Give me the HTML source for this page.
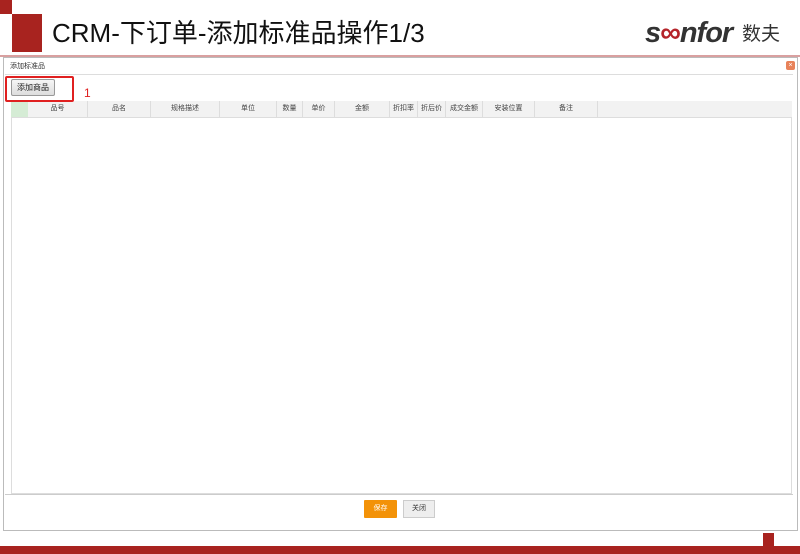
<!DOCTYPE html>
<html><head><meta charset="utf-8"><style>
*{margin:0;padding:0;box-sizing:border-box}
body{width:800px;height:554px;background:#fff;position:relative;overflow:hidden;font-family:"Liberation Sans","Noto Sans CJK SC",sans-serif}
.a{position:absolute}
.th{position:absolute;top:0;height:16px;line-height:16px;font-size:7px;color:#444;text-align:center;border-right:1px solid #ddd}
</style></head><body>
<div class="a" style="left:0;top:0;width:12px;height:14px;background:#a8231f"></div>
<div class="a" style="left:12px;top:14px;width:30px;height:38px;background:#a8231f"></div>
<div class="a" style="left:52px;top:17px;font-size:26px;color:#111;line-height:32px">CRM-下订单-添加标准品操作1/3</div>
<div class="a" style="left:645px;top:16px;font-size:29px;font-weight:bold;font-style:italic;color:#333;letter-spacing:-1px;line-height:34px">s<span style="color:#b5242a">∞</span>nfor</div>
<div class="a" style="left:742px;top:23px;font-size:19px;color:#333;line-height:24px">数夫</div>
<div class="a" style="left:0;top:55px;width:800px;height:2px;background:#d9a0a0"></div>
<div class="a" style="left:3px;top:57px;width:795px;height:474px;border:1px solid #bbb;background:#fff"></div>
<div class="a" style="left:10px;top:61px;font-size:7px;color:#333">添加标准品</div>
<div class="a" style="left:786px;top:61px;width:9px;height:9px;background:#e8825a;border-radius:2px;color:#fff;font-size:7px;line-height:9px;text-align:center">×</div>
<div class="a" style="left:5px;top:74px;width:788px;height:1px;background:#ddd"></div>
<div class="a" style="left:11px;top:101px;width:781px;height:393px;border:1px solid #ddd;background:#fff"></div>
<div class="a" style="left:11px;top:101px;width:781px;height:17px;background:#f2f2f2;border-bottom:1px solid #ddd">
<div class="a" style="left:0;top:0;width:17px;height:16px;background:#d5ecd5"></div>
<div class="th" style="left:17px;width:60px">品号</div>
<div class="th" style="left:77px;width:63px">品名</div>
<div class="th" style="left:140px;width:69px">规格描述</div>
<div class="th" style="left:209px;width:57px">单位</div>
<div class="th" style="left:266px;width:26px">数量</div>
<div class="th" style="left:292px;width:32px">单价</div>
<div class="th" style="left:324px;width:55px">金额</div>
<div class="th" style="left:379px;width:28px">折扣率</div>
<div class="th" style="left:407px;width:28px">折后价</div>
<div class="th" style="left:435px;width:37px">成交金额</div>
<div class="th" style="left:472px;width:52px">安装位置</div>
<div class="th" style="left:524px;width:63px">备注</div>
</div>
<div class="a" style="left:11px;top:79px;width:44px;height:17px;border:1px solid #999;border-radius:2px;background:linear-gradient(#f6f6f6,#ddd);font-size:8px;line-height:15px;text-align:center;color:#222">添加商品</div>
<div class="a" style="left:5px;top:76px;width:69px;height:26px;border:2px solid #e02020;border-radius:2px"></div>
<div class="a" style="left:84px;top:86px;font-size:12px;color:#e02020">1</div>
<div class="a" style="left:5px;top:494px;width:788px;height:1px;background:#ccc"></div>
<div class="a" style="left:364px;top:500px;width:33px;height:18px;background:#f39208;color:#fff;font-size:7px;line-height:18px;text-align:center;border-radius:1px">保存</div>
<div class="a" style="left:403px;top:500px;width:32px;height:18px;background:#eee;border:1px solid #ccc;color:#333;font-size:7px;line-height:16px;text-align:center">关闭</div>
<div class="a" style="left:763px;top:533px;width:11px;height:14px;background:#a8231f"></div>
<div class="a" style="left:0;top:546px;width:800px;height:8px;background:#a8231f"></div>
</body></html>
